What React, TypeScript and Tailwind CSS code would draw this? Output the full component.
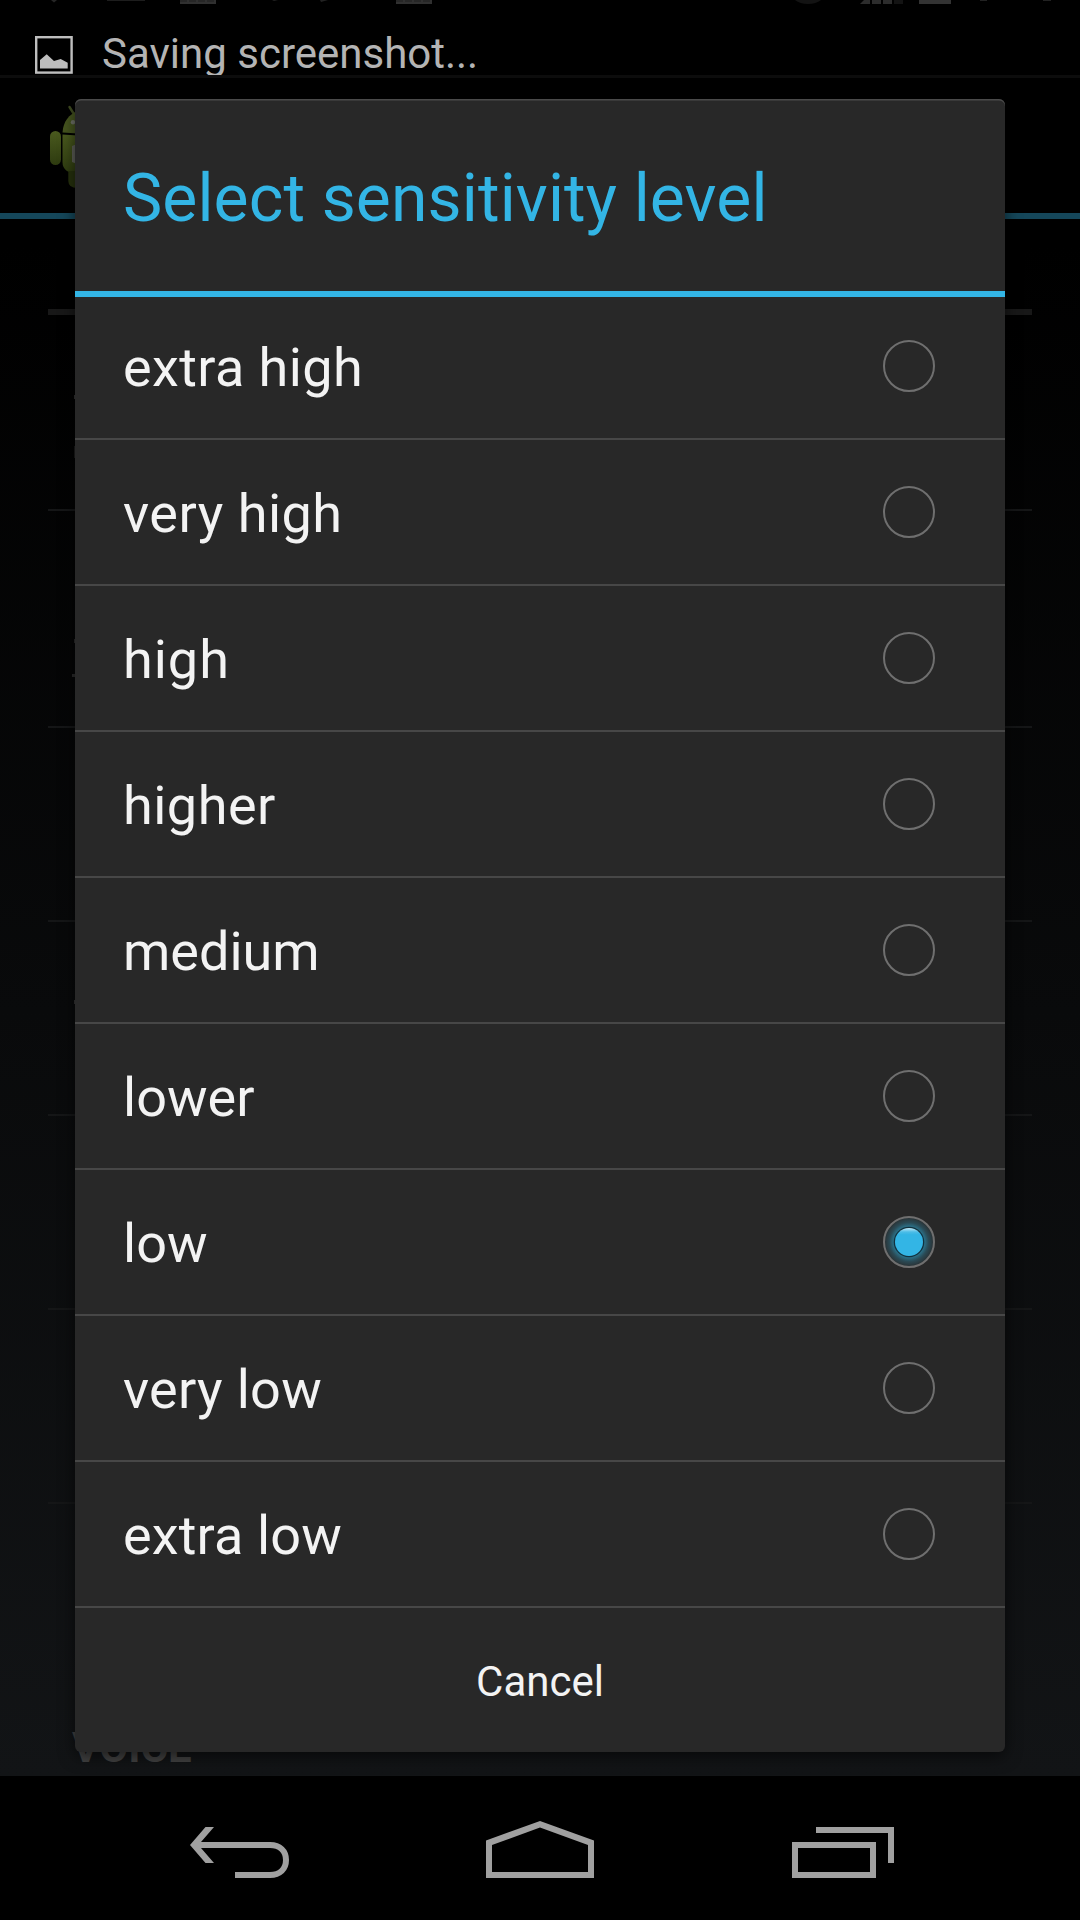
const levels = [
  { label: 'extra high', tracking: 'tracking-[0.4px]' },
  { label: 'very high', tracking: 'tracking-[0.5px]' },
  { label: 'high', tracking: 'tracking-[1px]' },
  { label: 'higher', tracking: 'tracking-[0.5px]' },
  { label: 'medium', tracking: 'tracking-normal' },
  { label: 'lower', tracking: 'tracking-normal' },
  { label: 'low', tracking: 'tracking-normal' },
  { label: 'very low', tracking: 'tracking-[0.3px]' },
  { label: 'extra low', tracking: 'tracking-[0.15px]' },
];

function StatusRemnants() {
  return (
    <svg className="absolute left-0 top-0" width="1080" height="4" viewBox="0 0 1080 4">
      <path d="M51 0h6l-3 2.5z" fill="#262626" />
      <path d="M107 0h38v1h-38z" fill="#1d1d1d" />
      <path d="M180 0h36v4h-36z" fill="#303030" />
      <path d="M180 1h36" stroke="#1c1c1c" strokeDasharray="7 2" />
      <path d="M272 0h6l-4 1zM320 0h8l-7 2z" fill="#222222" />
      <path d="M396 0h36v4h-36z" fill="#303030" />
      <path d="M396 1h36" stroke="#1c1c1c" strokeDasharray="7 2" />
      <path d="M795 0h26q-5 4-13 4t-13-4z" fill="#131313" />
      <path d="M860 4l4-4h6v4zM872 0h9v4h-9zM883 0h9v4h-9z" fill="#2c2c2c" />
      <path d="M894 0h9v4h-9z" fill="#131313" />
      <path d="M919 0h32v4h-32z" fill="#333333" />
      <path d="M980 0h7v1h-7zM1043 0h8v1h-8z" fill="#222222" />
    </svg>
  );
}

function ImageIcon() {
  return (
    <svg className="mt-9 shrink-0" width="38" height="38" viewBox="0 0 38 38">
      <rect x="1.2" y="1.2" width="35.4" height="35.4" fill="none" stroke="#bebebe" strokeWidth="2.4" />
      <path d="M5 24l6.7-5.7L19 25l6.7-2 7 3.7v5.8H5z" fill="#bebebe" />
    </svg>
  );
}

function AndroidIcon() {
  return (
    <svg className="block" width="60" height="90" viewBox="48 104 60 90">
      <defs>
        <linearGradient id="droid" x1="0" y1="0" x2="0" y2="1">
          <stop offset="0" stopColor="#4a5a1e" />
          <stop offset="1" stopColor="#2e3b10" />
        </linearGradient>
      </defs>
      <path d="M69.5 107l5 8" stroke="#3f4b20" strokeWidth="2.4" strokeLinecap="round" />
      <path d="M62.5 132.500C63 122 69 114 78 111v22.500z" fill="#46551f" />
      <circle cx="73" cy="122.300" r="2.200" fill="#70736a" />
      <rect x="50" y="131" width="11" height="34" rx="5.500" fill="url(#droid)" />
      <path d="M62.500 134.500l15 1V174q-15-1-15-12z" fill="url(#droid)" />
      <path d="M68.300 171h9v17q-9 0-9-7z" fill="#26310d" />
      <path d="M72 146l5-2v20l-5-2z" fill="#5d5f58" />
    </svg>
  );
}

function Radio({ checked }: { checked: boolean }) {
  return (
    <svg className="shrink-0" width="52" height="52" viewBox="0 0 52 52">
      {checked && (
        <>
          <defs>
            <radialGradient id="halo">
              <stop offset="0.55" stopColor="#2b7f9b" />
              <stop offset="0.78" stopColor="#2a4a55" />
              <stop offset="1" stopColor="#2a2f31" />
            </radialGradient>
            <linearGradient id="dot" x1="0" y1="0" x2="0" y2="1">
              <stop offset="0" stopColor="#c4e9f7" />
              <stop offset="0.14" stopColor="#4dbde7" />
              <stop offset="0.24" stopColor="#33b5e5" />
            </linearGradient>
          </defs>
          <circle cx="26" cy="26" r="25" fill="url(#halo)" />
          <circle cx="26" cy="26" r="15.300" fill="#12313d" />
          <circle cx="26" cy="26" r="14" fill="url(#dot)" />
        </>
      )}
      <circle cx="26" cy="26" r="25" fill="none" stroke="#6f6f6f" strokeWidth="2" />
    </svg>
  );
}

function Rule({ gap }: { gap: string }) {
  return <div className={`mx-12 h-0.5 shrink-0 bg-[#151617] ${gap}`} />;
}

function SettingsBackdrop() {
  return (
    <div className="absolute left-0 top-[75px] flex h-[1701px] w-full flex-col overflow-hidden bg-linear-to-b/srgb from-black from-10% to-[#121416]">
      <div className="h-[3px] shrink-0 bg-[#0c0c0c]" />
      <div className="h-[135px] shrink-0 pl-12 pt-[26px]">
        <AndroidIcon />
      </div>
      <div className="h-1.5 shrink-0 bg-[#15475a]" />
      <div className="mx-12 mt-[90px] h-1.5 shrink-0 bg-[#181818]" />
      <Rule gap="mt-[194px]" />
      <Rule gap="mt-[215px]" />
      <Rule gap="mt-[192px]" />
      <Rule gap="mt-[192px]" />
      <Rule gap="mt-[192px]" />
      <Rule gap="mt-[192px]" />
      <div className="mt-[219px] pl-[72px] text-[42px] font-bold leading-[50px] text-[#424242]">VOICE</div>
      <div className="absolute left-[72px] top-[599px] h-[3px] w-[3px] bg-[#2a2a2a]" />
      <div className="absolute left-[74px] top-[320px] h-1 w-px bg-[#333333]" />
      <div className="absolute left-[74px] top-[371px] h-3 w-px bg-[#1c1c1c]" />
      <div className="absolute left-[74px] top-[564px] h-1 w-px bg-[#2a2a2a]" />
      <div className="absolute left-[74px] top-[925px] h-1 w-px bg-[#333333]" />
    </div>
  );
}

function NavBar() {
  return (
    <nav className="absolute bottom-0 left-0 flex h-36 w-full bg-black pl-[190px] pt-[45px]">
      <svg className="mr-[197px]" width="99" height="57" viewBox="190 1821 99 57" fill="#a0a0a0">
        <path d="M190 1845l15.500-18h8.500l-13 15v6l13 15h-8.500z" />
        <path d="M197 1845H270C280 1845 286 1851 286 1860S280 1875 270 1875H235" fill="none" stroke="#a0a0a0" strokeWidth="6" />
      </svg>
      <svg className="mr-[198px]" width="108" height="57" viewBox="486 1821 108 57" fill="#a0a0a0">
        <path
          fillRule="evenodd"
          d="M486 1840.500L540 1821l54 19.500V1878H486zM492 1845v27h96v-27l-48-17.400z"
        />
      </svg>
      <svg width="102" height="57" viewBox="792 1821 102 57" fill="none" stroke="#a0a0a0" strokeWidth="6">
        <path d="M816 1830h75v33" />
        <rect x="795" y="1845" width="78" height="30" />
      </svg>
    </nav>
  );
}

export default function App() {
  return (
    <div className="relative h-[1920px] w-[1080px] overflow-hidden bg-black font-['Roboto',sans-serif] antialiased">
      <header className="relative flex h-[75px] overflow-hidden pl-[35px]">
        <StatusRemnants />
        <ImageIcon />
        <span className="ml-[29px] mt-[29px] whitespace-nowrap text-[42px] leading-[50px] text-[#b4b4b4]">
          Saving screenshot...
        </span>
      </header>
      <SettingsBackdrop />
      <div
        role="dialog"
        className="absolute left-[75px] top-[99px] flex h-[1653px] w-[930px] flex-col rounded-md bg-[#282828] text-[#f3f3f3] shadow-[0_4px_16px_rgba(0,0,0,0.6),inset_0_1.500px_0_#4a4a4a]"
      >
        <h1 className="flex h-48 shrink-0 items-center pl-12 pt-[7px] text-[66px] leading-none tracking-[0.13px] text-[#33b5e5]">
          Select sensitivity level
        </h1>
        <div className="relative z-10 h-1.5 shrink-0 bg-[#33b5e5]" />
        <ul className="-mt-[3px]">
          {levels.map(({ label, tracking }) => (
            <li key={label} className="flex h-[146px] items-center justify-between border-b-2 border-[#474747] pl-12 pr-[70px]">
              <span className={`pt-[3px] text-[54px] leading-none ${tracking}`}>{label}</span>
              <Radio checked={label === 'low'} />
            </li>
          ))}
        </ul>
        <button className="h-36 pt-[3px] text-[42px] leading-none">Cancel</button>
      </div>
      <NavBar />
    </div>
  );
}
